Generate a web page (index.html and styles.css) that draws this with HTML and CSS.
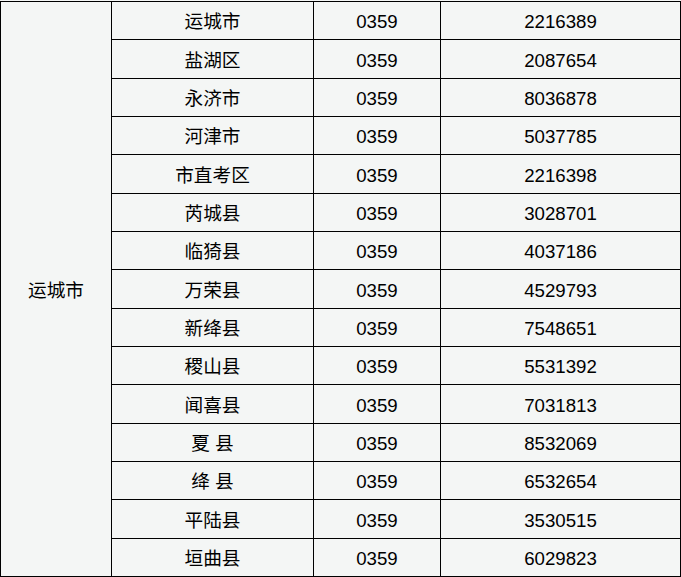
FILE: index.html
```html
<!DOCTYPE html>
<html lang="zh-CN">
<head>
<meta charset="utf-8">
<title>运城市</title>
<link rel="stylesheet" href="styles.css">
</head>
<body>
<table class="tel">
<colgroup>
<col class="c1"><col class="c2"><col class="c3"><col class="c4">
</colgroup>
<tbody>
<tr><td class="city" rowspan="15">运城市</td><td>运城市</td><td>0359</td><td>2216389</td></tr>
<tr><td>盐湖区</td><td>0359</td><td>2087654</td></tr>
<tr><td>永济市</td><td>0359</td><td>8036878</td></tr>
<tr><td>河津市</td><td>0359</td><td>5037785</td></tr>
<tr><td>市直考区</td><td>0359</td><td>2216398</td></tr>
<tr><td>芮城县</td><td>0359</td><td>3028701</td></tr>
<tr><td>临猗县</td><td>0359</td><td>4037186</td></tr>
<tr><td>万荣县</td><td>0359</td><td>4529793</td></tr>
<tr><td>新绛县</td><td>0359</td><td>7548651</td></tr>
<tr><td>稷山县</td><td>0359</td><td>5531392</td></tr>
<tr><td>闻喜县</td><td>0359</td><td>7031813</td></tr>
<tr><td>夏 县</td><td>0359</td><td>8532069</td></tr>
<tr><td>绛 县</td><td>0359</td><td>6532654</td></tr>
<tr><td>平陆县</td><td>0359</td><td>3530515</td></tr>
<tr><td>垣曲县</td><td>0359</td><td>6029823</td></tr>
</tbody>
</table>
</body>
</html>
```
FILE: styles.css
```css
html, body {
  margin: 0;
  padding: 0;
  background: #f4f6f5;
}
body {
  padding-top: 1px;
}
.tel {
  border-collapse: collapse;
  width: 680px;
  table-layout: fixed;
  font-family: "Liberation Sans", "Noto Sans CJK SC", sans-serif;
  font-size: 18.67px;
  color: #000;
  background: #f4f6f5;
}
.c1 { width: 111px; }
.c2 { width: 202px; }
.c3 { width: 127px; }
.c4 { width: 240px; }
.tel tr {
  height: 38.33px;
}
.tel td {
  border: 1px solid #000;
  padding: 4px 0 0;
  text-align: center;
  vertical-align: middle;
  line-height: 1.2;
}
```
